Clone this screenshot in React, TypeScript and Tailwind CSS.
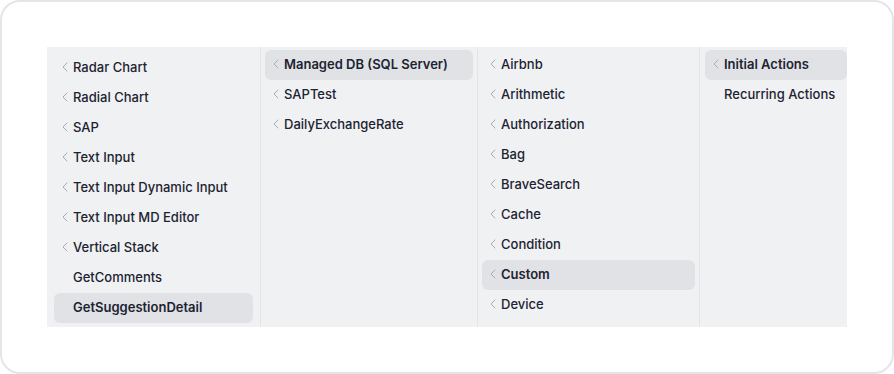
import { ChevronLeft } from "lucide-react";

type Item = { label: string; chevron?: boolean; active?: boolean };

const columns: { items: Item[]; className: string }[] = [
  {
    className: "w-[214px] px-[7px] pt-[6px]",
    items: [
      { label: "Radar Chart", chevron: true },
      { label: "Radial Chart", chevron: true },
      { label: "SAP", chevron: true },
      { label: "Text Input", chevron: true },
      { label: "Text Input Dynamic Input", chevron: true },
      { label: "Text Input MD Editor", chevron: true },
      { label: "Vertical Stack", chevron: true },
      { label: "GetComments" },
      { label: "GetSuggestionDetail", active: true },
    ],
  },
  {
    className: "w-[217px] px-[4px] pt-[3px]",
    items: [
      { label: "Managed DB (SQL Server)", chevron: true, active: true },
      { label: "SAPTest", chevron: true },
      { label: "DailyExchangeRate", chevron: true },
    ],
  },
  {
    className: "w-[222px] px-[4px] pt-[3px]",
    items: [
      { label: "Airbnb", chevron: true },
      { label: "Arithmetic", chevron: true },
      { label: "Authorization", chevron: true },
      { label: "Bag", chevron: true },
      { label: "BraveSearch", chevron: true },
      { label: "Cache", chevron: true },
      { label: "Condition", chevron: true },
      { label: "Custom", chevron: true, active: true },
      { label: "Device", chevron: true },
    ],
  },
  {
    className: "flex-1 pl-[5px] pt-[3px]",
    items: [
      { label: "Initial Actions", chevron: true, active: true },
      { label: "Recurring Actions" },
    ],
  },
];

function Row({ item }: { item: Item }) {
  return (
    <div
      className={`flex h-[30px] items-center rounded-md pl-[3px] text-[13px] text-[#1c2331] ${
        item.active ? "bg-[#e1e2e6] font-semibold" : "font-medium"
      }`}
    >
      <span className="mb-[3px] flex h-4 w-4 items-center justify-center">
        {item.chevron && <ChevronLeft className="h-4 w-4 text-[#a7abb3]" strokeWidth={1.5} />}
      </span>
      <span className="whitespace-nowrap">{item.label}</span>
    </div>
  );
}

export default function App() {
  return (
    <div className="h-[374px] w-[894px] bg-white" style={{ fontFamily: "Inter, 'Noto Sans', sans-serif" }}>
      <div className="h-full w-full rounded-[20px] border-2 border-[#e4e5e8] bg-white px-[45px] pt-[45px]">
        <div className="flex h-[280px] w-[800px] overflow-hidden bg-[#f0f1f3]">
          {columns.map((col, i) => (
            <div
              key={i}
              className={`flex shrink-0 flex-col ${col.className} ${
                i < columns.length - 1 ? "border-r border-[#e2e4e8]" : ""
              }`}
            >
              {col.items.map((item) => (
                <Row key={item.label} item={item} />
              ))}
            </div>
          ))}
        </div>
      </div>
    </div>
  );
}
